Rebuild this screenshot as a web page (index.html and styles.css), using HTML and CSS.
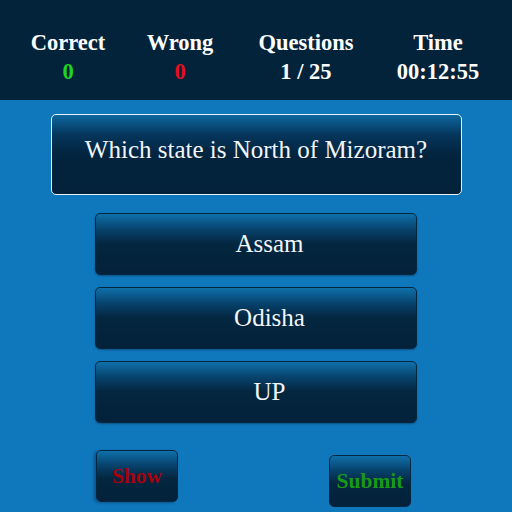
FILE: index.html
```html
<!DOCTYPE html>
<html lang="en">
<head>
<meta charset="utf-8">
<title>Quiz</title>
<link rel="stylesheet" href="styles.css">
</head>
<body>
<header class="stats">
  <div class="stat"><div class="label">Correct</div><div class="value good">0</div></div>
  <div class="stat"><div class="label">Wrong</div><div class="value bad">0</div></div>
  <div class="stat"><div class="label">Questions</div><div class="value">1 / 25</div></div>
  <div class="stat"><div class="label">Time</div><div class="value">00:12:55</div></div>
</header>
<main class="quiz">
  <div class="question">Which state is North of Mizoram?</div>
  <div class="options">
    <button class="option">Assam</button>
    <button class="option">Odisha</button>
    <button class="option">UP</button>
  </div>
  <div class="actions">
    <button class="action show">Show</button>
    <button class="action submit">Submit</button>
  </div>
</main>
</body>
</html>
```
FILE: styles.css
```css
html, body {
  margin: 0;
  padding: 0;
}
body {
  background: #0f78bd;
  font-family: "Liberation Serif", "Times New Roman", serif;
  width: 512px;
  height: 512px;
  overflow: hidden;
}
.stats {
  background: #03233b;
  height: 100px;
  box-sizing: border-box;
  padding: 28px 0 0 8px;
  display: grid;
  grid-template-columns: 120px 104px 148px 116px;
  color: #fff;
  font-weight: bold;
  font-size: 22.5px;
  line-height: 29px;
  text-align: center;
}
.value.good { color: #1fd41f; }
.value.bad { color: #e0101c; }

.quiz {
  display: flex;
  flex-direction: column;
  align-items: center;
}
.question {
  margin-top: 14px;
  width: 411px;
  box-sizing: border-box;
  border: 1px solid #e8f2fa;
  border-radius: 5px;
  padding: 20px 0 29px;
  font-size: 25px;
  line-height: 30px;
  color: #f2f6fa;
  text-align: center;
  background: linear-gradient(#0d67a0 0%, #05365c 25%, #03243e 50%, #03223a 100%);
}
.options {
  margin-top: 18px;
  display: flex;
  flex-direction: column;
  gap: 12px;
}
.option {
  width: 322px;
  height: 62px;
  box-sizing: border-box;
  border: 1px solid #04263f;
  border-radius: 5px;
  padding: 0 0 0 27px;
  font-family: "Liberation Serif", "Times New Roman", serif;
  font-size: 25px;
  color: #f2f6fa;
  text-align: center;
  background: linear-gradient(#0f70aa 0%, #07436e 25%, #04263f 50%, #03213a 100%);
  box-shadow: 0 1px 2px rgba(0, 20, 40, 0.4);
}
.actions {
  width: 322px;
  box-sizing: border-box;
  padding: 0 6px 0 1px;
  margin-top: 27px;
  display: flex;
  justify-content: space-between;
  align-items: flex-start;
}
.action {
  width: 82px;
  height: 52px;
  box-sizing: border-box;
  border: 1px solid #04263f;
  border-radius: 5px;
  padding: 0;
  font-family: "Liberation Serif", "Times New Roman", serif;
  font-weight: bold;
  font-size: 21.5px;
  text-align: center;
  background: linear-gradient(#0f70aa 0%, #07436e 28%, #04263f 55%, #03213a 100%);
}
.show {
  color: #a8000f;
  box-shadow: -2px 1px 3px rgba(0, 20, 40, 0.35);
}
.submit {
  margin-top: 5px;
  color: #179a17;
}
```
